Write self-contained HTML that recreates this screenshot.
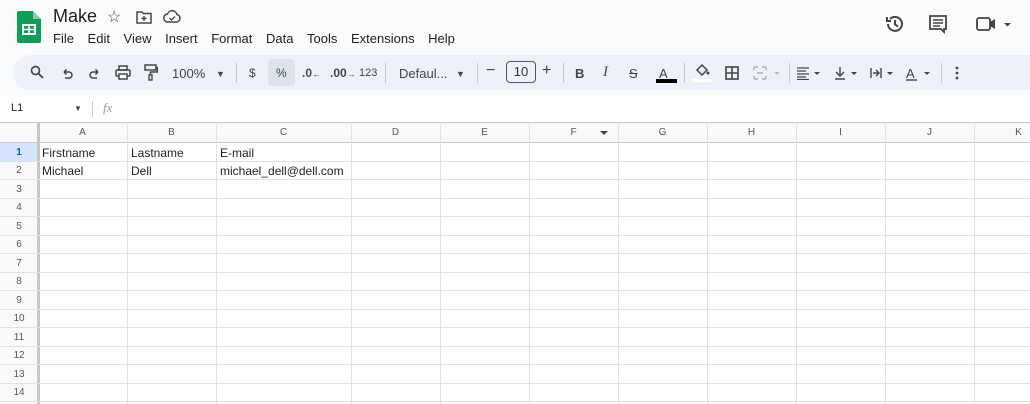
<!DOCTYPE html>
<html><head><style>
*{margin:0;padding:0;box-sizing:border-box}
body{width:1030px;height:404px;overflow:hidden;background:#f9fbfd;font-family:"Liberation Sans",Arial,sans-serif;position:relative;color:#1f1f1f}
.a{position:absolute}
.menu span{margin-right:13.6px}
.tb{left:13px;top:55px;width:1017px;height:35px;background:#edf2fa;border-radius:18px 0 0 18px}
.t{position:absolute;top:66px;font-size:13px;color:#444}
.sep{position:absolute;top:63px;width:1px;height:20px;background:#c7c7c7}
svg{position:absolute}
.grid{left:0;top:122px;width:1030px;height:282px;background:#fff}
.cell{position:absolute;font-size:12px;color:#1f1f1f}
.ch{position:absolute;top:127px;font-size:10px;color:#575757;text-align:center}
.rh{position:absolute;left:0;width:38px;font-size:10px;color:#575757;text-align:center}
</style></head><body>
<svg style="left:17px;top:11px" width="24" height="32" viewBox="0 0 24 32"><path d="M2 0h14l8 8v22a2 2 0 0 1-2 2H2a2 2 0 0 1-2-2V2a2 2 0 0 1 2-2z" fill="#0f9d58"/><path d="M16 0v8h8z" fill="#87ceac"/><rect x="6" y="14" width="12" height="9" fill="none" stroke="#fff" stroke-width="2"/><path d="M6 18.5h12M12 14v9" stroke="#fff" stroke-width="1.6"/></svg>
<div class="a" style="left:53px;top:6px;font-size:18px;color:#1f1f1f">Make</div>
<div class="a" style="left:107px;top:7px;font-size:16px;color:#444">☆</div>
<svg style="left:136px;top:10px" width="16" height="14" viewBox="0 0 16 14"><path d="M1 2h5l1.5 1.5H15V13H1z" fill="none" stroke="#444" stroke-width="1.5"/><path d="M8 6v5M5.5 8.5h5" stroke="#444" stroke-width="1.4"/></svg>
<svg style="left:163px;top:10px" width="18" height="13" viewBox="0 0 18 13"><path d="M5 12a4 4 0 0 1-.5-8A5 5 0 0 1 14 4.5 3.8 3.8 0 0 1 13.5 12z" fill="none" stroke="#444" stroke-width="1.5"/><path d="M6.5 8l2 2 3.5-3.5" fill="none" stroke="#444" stroke-width="1.3"/></svg>
<div class="a menu" style="left:53px;top:31px;font-size:13px;color:#1f1f1f"><span>File</span><span>Edit</span><span>View</span><span>Insert</span><span>Format</span><span>Data</span><span>Tools</span><span>Extensions</span><span>Help</span></div>
<svg style="left:884px;top:13px" width="22" height="22" viewBox="0 0 22 22"><path d="M4 11a7 7 0 1 0 2-5" fill="none" stroke="#444" stroke-width="2"/><path d="M3 4v4h4" fill="none" stroke="#444" stroke-width="2"/><path d="M11 7v4.5l3 2" fill="none" stroke="#444" stroke-width="2"/></svg>
<svg style="left:928px;top:14px" width="20" height="20" viewBox="0 0 20 20"><path d="M2 2h16v13h-2v3l-3-3H2z" fill="none" stroke="#444" stroke-width="1.8"/><path d="M5 6h10M5 9h10M5 12h7" stroke="#444" stroke-width="1.5"/></svg>
<svg style="left:976px;top:16px" width="38" height="16" viewBox="0 0 38 16"><rect x="1" y="2" width="13" height="12" rx="2" fill="none" stroke="#444" stroke-width="1.8"/><path d="M14 6l5-3v10l-5-3z" fill="#444"/><path d="M28 7h7l-3.5 3.5z" fill="#444"/></svg>
<div class="a tb"></div>
<svg style="left:30px;top:65px" width="14" height="14" viewBox="0 0 14 14"><circle cx="5.5" cy="5.5" r="4" fill="none" stroke="#444" stroke-width="1.7"/><path d="M8.5 8.5l4.5 4.5" stroke="#444" stroke-width="1.8"/></svg>
<svg style="left:61px;top:67px" width="12" height="12" viewBox="0 0 12 12"><path d="M3 5h5a3 3 0 0 1 0 6H4M3 5l2.5-2.5M3 5l2.5 2.5" fill="none" stroke="#444" stroke-width="1.5"/></svg>
<svg style="left:89px;top:67px" width="12" height="12" viewBox="0 0 12 12"><path d="M9 5H4a3 3 0 0 0 0 6h4M9 5L6.5 2.5M9 5L6.5 7.5" fill="none" stroke="#444" stroke-width="1.5"/></svg>
<svg style="left:115px;top:65px" width="16" height="15" viewBox="0 0 16 15"><rect x="4" y="1" width="8" height="4" fill="none" stroke="#444" stroke-width="1.5"/><rect x="1" y="5" width="14" height="6" rx="1" fill="none" stroke="#444" stroke-width="1.5"/><rect x="4" y="9" width="8" height="5" fill="#fff" stroke="#444" stroke-width="1.5"/></svg>
<svg style="left:144px;top:64px" width="14" height="17" viewBox="0 0 14 17"><rect x="1" y="1" width="11" height="5" fill="none" stroke="#444" stroke-width="1.5"/><path d="M12 3.5h1.5V8H6.5v3" fill="none" stroke="#444" stroke-width="1.5"/><rect x="5" y="11" width="3" height="5" fill="none" stroke="#444" stroke-width="1.4"/></svg>
<div class="t" style="left:172px">100%</div>
<div class="t" style="left:216px;font-size:9px;top:69px">▼</div>
<div class="sep" style="left:236px"></div>
<div class="t" style="left:249px;font-size:12px">$</div>
<div class="a" style="left:268px;top:59px;width:27px;height:27px;background:#dde3ea;border-radius:4px"></div>
<div class="t" style="left:276px;font-size:12px">%</div>
<div class="t" style="left:302px;font-size:12px;font-weight:bold">.0<span style="font-size:9px">←</span></div>
<div class="t" style="left:330px;font-size:12px;font-weight:bold">.00<span style="font-size:9px">→</span></div>
<div class="t" style="left:359px;font-size:11px;top:67px">123</div>
<div class="sep" style="left:385px"></div>
<div class="t" style="left:399px">Defaul...</div>
<div class="t" style="left:456px;font-size:9px;top:69px">▼</div>
<div class="sep" style="left:477px"></div>
<div class="t" style="left:486px;font-size:16px;top:62px">−</div>
<div class="a" style="left:506px;top:61px;width:30px;height:22px;border:1px solid #555;border-radius:4px;font-size:13px;color:#333;text-align:center;line-height:20px">10</div>
<div class="t" style="left:542px;font-size:16px;top:62px">+</div>
<div class="sep" style="left:563px"></div>
<div class="t" style="left:575px;font-weight:bold">B</div>
<div class="t" style="left:603px;font-style:italic;font-family:'Liberation Serif',serif;font-size:15px;top:64px">I</div>
<div class="t" style="left:629px;text-decoration:line-through">S</div>
<div class="t" style="left:659px">A</div>
<div class="a" style="left:656px;top:79px;width:21px;height:4px;background:#000"></div>
<div class="sep" style="left:684px"></div>
<svg style="left:694px;top:63px" width="16" height="14" viewBox="0 0 16 14"><path d="M3 7l5-5 5 5-5 5z" fill="none" stroke="#444" stroke-width="1.5"/><circle cx="14" cy="10" r="1.5" fill="#444"/></svg>
<div class="a" style="left:692px;top:79px;width:20px;height:3px;background:#fff"></div>
<svg style="left:725px;top:66px" width="14" height="14" viewBox="0 0 14 14"><rect x="1" y="1" width="12" height="12" fill="none" stroke="#444" stroke-width="1.6"/><path d="M7 1v12M1 7h12" stroke="#444" stroke-width="1.6"/></svg>
<svg style="left:753px;top:66px" width="30" height="14" viewBox="0 0 30 14"><path d="M1 1h4M9 1h4M1 13h4M9 13h4M1 1v3M13 1v3M1 10v3M13 10v3M4 7h6" fill="none" stroke="#aaa" stroke-width="1.4"/><path d="M21 6h6l-3 3z" fill="#bbb"/></svg>
<div class="sep" style="left:789px"></div>
<svg style="left:796px;top:66px" width="30" height="14" viewBox="0 0 30 14"><path d="M1 2h12M1 5h9M1 8h12M1 11h9M1 13.5h12" stroke="#444" stroke-width="1.3"/><path d="M18 6h6l-3 3z" fill="#444"/></svg>
<svg style="left:834px;top:66px" width="28" height="14" viewBox="0 0 28 14"><path d="M6 1v9M2 6l4 4 4-4M1 13h10" fill="none" stroke="#444" stroke-width="1.4"/><path d="M17 6h6l-3 3z" fill="#444"/></svg>
<svg style="left:870px;top:66px" width="28" height="14" viewBox="0 0 28 14"><path d="M1 2v10M11 2v10M3 7h6M6 4l3 3-3 3" fill="none" stroke="#444" stroke-width="1.4"/><path d="M17 6h6l-3 3z" fill="#444"/></svg>
<div class="t" style="left:906px">A</div>
<svg style="left:905px;top:66px" width="30" height="16" viewBox="0 0 30 16"><path d="M1 14h11" stroke="#444" stroke-width="1.4"/><path d="M19 6h6l-3 3z" fill="#444"/></svg>
<div class="sep" style="left:941px"></div>
<svg style="left:954px;top:66px" width="6" height="14" viewBox="0 0 6 14"><circle cx="3" cy="2" r="1.4" fill="#444"/><circle cx="3" cy="7" r="1.4" fill="#444"/><circle cx="3" cy="12" r="1.4" fill="#444"/></svg>
<div class="a" style="left:0;top:96px;width:1030px;height:26px;background:#fff"></div>
<div class="a" style="left:11px;top:102px;font-size:11px;color:#1f1f1f">L1</div>
<div class="a" style="left:74px;top:104px;font-size:8px;color:#444">▼</div>
<div class="a" style="left:92px;top:101px;width:1px;height:16px;background:#ccc"></div>
<div class="a" style="left:103px;top:100px;font-size:13px;font-style:italic;color:#999;font-family:'Liberation Serif',serif">fx</div>
<div class="a grid"></div>
<div class="a" style="left:0;top:122px;width:1030px;height:21px;background:#f8f9fa;border-top:1px solid #c4c7c5;border-bottom:1px solid #c4c7c5"></div>
<div class="a" style="left:0;top:143px;width:38px;height:261px;background:#f8f9fa"></div>
<div class="a" style="left:0;top:143px;width:38px;height:18px;background:#d3e3fd"></div>
<div class="a" style="left:37px;top:122px;width:3px;height:282px;background:#c4c7c5"></div>
<svg class="a" style="left:0;top:122px" width="1030" height="282">
<g stroke="#e1e1e1" stroke-width="1">
<path d="M127.5 0V282M216.5 0V282M351.5 0V282M440.5 0V282M529.5 0V282M618.5 0V282M707.5 0V282M796.5 0V282M885.5 0V282M974.5 0V282"/>
<path d="M0 39.5H1030M0 57.5H1030M0 76.5H1030M0 94.5H1030M0 113.5H1030M0 131.5H1030M0 150.5H1030M0 168.5H1030M0 187.5H1030M0 205.5H1030M0 224.5H1030M0 242.5H1030M0 261.5H1030M0 279.5H1030"/>
</g>
<path d="M600 9h8l-4 4z" fill="#444"/>
</svg>
<div class="ch" style="left:38px;width:89px">A</div>
<div class="ch" style="left:127px;width:89px">B</div>
<div class="ch" style="left:216px;width:135px">C</div>
<div class="ch" style="left:351px;width:89px">D</div>
<div class="ch" style="left:440px;width:89px">E</div>
<div class="ch" style="left:529px;width:89px">F</div>
<div class="ch" style="left:618px;width:89px">G</div>
<div class="ch" style="left:707px;width:89px">H</div>
<div class="ch" style="left:796px;width:89px">I</div>
<div class="ch" style="left:885px;width:89px">J</div>
<div class="ch" style="left:974px;width:89px">K</div>
<div class="rh" style="top:147px;font-weight:bold;color:#0b57d0">1</div>
<div class="rh" style="top:165px">2</div>
<div class="rh" style="top:184px">3</div>
<div class="rh" style="top:202px">4</div>
<div class="rh" style="top:221px">5</div>
<div class="rh" style="top:239px">6</div>
<div class="rh" style="top:258px">7</div>
<div class="rh" style="top:276px">8</div>
<div class="rh" style="top:295px">9</div>
<div class="rh" style="top:313px">10</div>
<div class="rh" style="top:332px">11</div>
<div class="rh" style="top:350px">12</div>
<div class="rh" style="top:369px">13</div>
<div class="rh" style="top:387px">14</div>
<div class="cell" style="left:42px;top:146px">Firstname</div>
<div class="cell" style="left:131px;top:146px">Lastname</div>
<div class="cell" style="left:220px;top:146px">E-mail</div>
<div class="cell" style="left:42px;top:164px">Michael</div>
<div class="cell" style="left:131px;top:164px">Dell</div>
<div class="cell" style="left:220px;top:164px">michael_dell@dell.com</div>
</body></html>
